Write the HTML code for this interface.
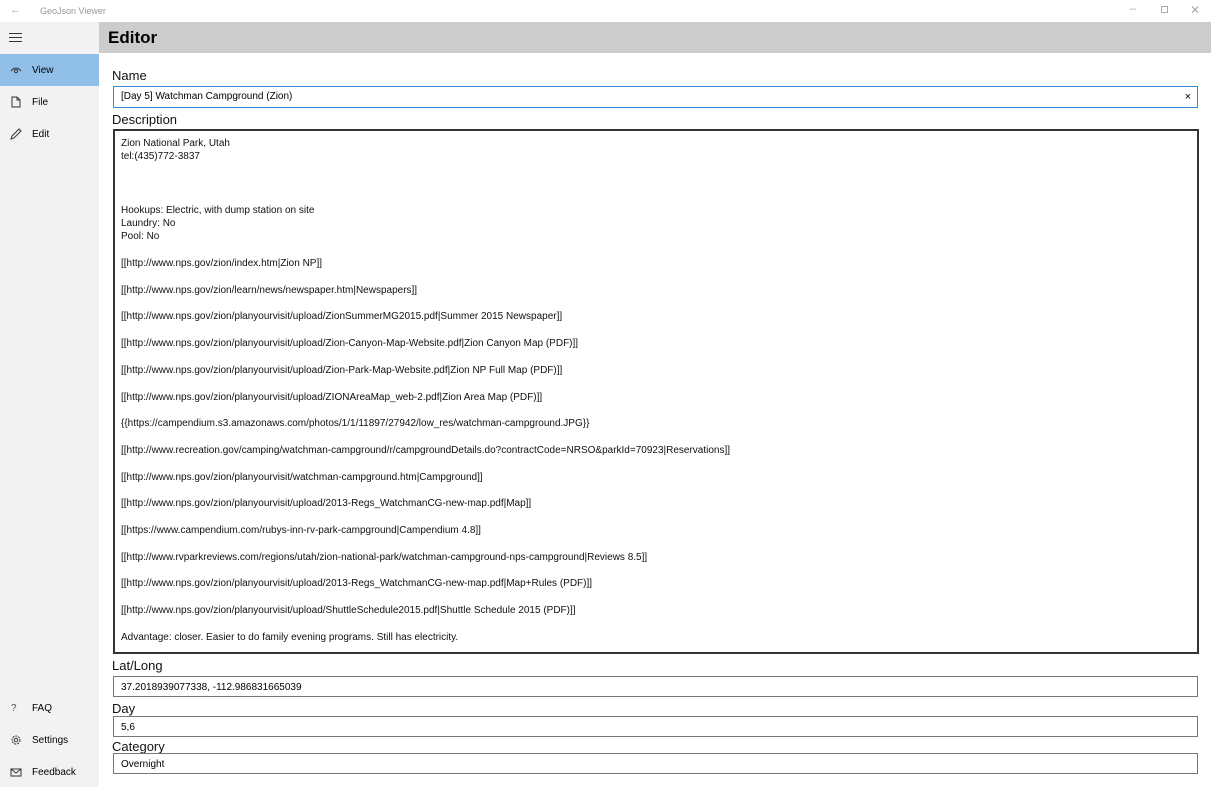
<!DOCTYPE html>
<html><head><meta charset="utf-8"><style>
*{margin:0;padding:0;box-sizing:border-box}
body{width:1211px;height:787px;overflow:hidden;background:#fff;font-family:"Liberation Sans",sans-serif;color:#000;position:relative}
.abs{position:absolute}
.tb{left:0;top:0;width:1211px;height:22px;background:#fff;font-size:9px;color:#999}
.side{left:0;top:22px;width:99px;height:765px;background:#f2f2f2}
.hdr{left:99px;top:22px;width:1112px;height:31px;background:#ccc;font-weight:bold;font-size:17px;padding:6px 0 0 9px}
.nav{left:0;width:99px;height:32px;font-size:10px;line-height:34px;padding-left:32px}
.nav svg{position:absolute;left:10px;top:10px}
.lbl{left:112px;font-size:13px;color:#111}
.inp{left:113px;width:1085px;border:1px solid #777;font-size:10px;padding-left:7px;line-height:21px}
.ta{left:113px;top:129px;width:1086px;height:525px;border:2px solid #333;font-size:10px;line-height:13.35px;padding:6px 0 0 6px;white-space:pre;color:#111}
</style></head><body>
<div class="abs tb"><span class="abs" style="left:10px;top:4px;font-size:11px;color:#aaa">←</span><span class="abs" style="left:40px;top:6px">GeoJson Viewer</span>
<span class="abs" style="left:1130px;top:3px;font-size:11px;color:#aaa">–</span>
<span class="abs" style="left:1161px;top:6px;width:7px;height:7px;border:1px solid #aaa"></span>
<span class="abs" style="left:1190px;top:3px;font-size:12px;color:#aaa">✕</span></div>
<div class="abs side"></div>
<div class="abs" style="left:9px;top:33px;width:13px;height:9px;border-top:1.3px solid #333;border-bottom:1.3px solid #333"><div style="margin-top:3px;border-top:1.3px solid #333"></div></div>
<div class="abs hdr">Editor</div>
<div class="abs nav" style="top:54px;background:#90c0e8">View<svg width="12" height="12" viewBox="0 0 12 12"><path d="M1 7 Q6 1 11 7" fill="none" stroke="#333"/><circle cx="6" cy="7" r="1.6" fill="none" stroke="#333"/></svg></div>
<div class="abs nav" style="top:86px">File<svg width="12" height="12" viewBox="0 0 12 12"><path d="M2 1H7L10 4V11H2Z M7 1V4H10" fill="none" stroke="#333"/></svg></div>
<div class="abs nav" style="top:118px">Edit<svg width="12" height="12" viewBox="0 0 12 12"><path d="M1 11L2 8L9 1L11 3L4 10Z" fill="none" stroke="#333"/></svg></div>
<div class="abs nav" style="top:692px">FAQ<span class="abs" style="left:11px;top:0;color:#555">?</span></div>
<div class="abs nav" style="top:724px">Settings<svg width="12" height="12" viewBox="0 0 12 12"><circle cx="6" cy="6" r="4" fill="none" stroke="#333" stroke-dasharray="2 1"/><circle cx="6" cy="6" r="1.8" fill="none" stroke="#333"/></svg></div>
<div class="abs nav" style="top:756px">Feedback<svg width="12" height="12" viewBox="0 0 12 12"><path d="M1 3H11V10H1Z M1 3L6 7L11 3" fill="none" stroke="#333"/></svg></div>
<div class="abs lbl" style="top:68px">Name</div>
<div class="abs inp" style="top:86px;height:22px;border:1.5px solid #3c8bd9;line-height:20px">[Day 5] Watchman Campground (Zion)<span class="abs" style="right:6px;top:0;font-size:11px">×</span></div>
<div class="abs lbl" style="top:112px">Description</div>
<div class="abs ta">Zion National Park, Utah
tel:(435)772-3837



Hookups: Electric, with dump station on site
Laundry: No
Pool: No

[[http://www.nps.gov/zion/index.htm|Zion NP]]

[[http://www.nps.gov/zion/learn/news/newspaper.htm|Newspapers]]

[[http://www.nps.gov/zion/planyourvisit/upload/ZionSummerMG2015.pdf|Summer 2015 Newspaper]]

[[http://www.nps.gov/zion/planyourvisit/upload/Zion-Canyon-Map-Website.pdf|Zion Canyon Map (PDF)]]

[[http://www.nps.gov/zion/planyourvisit/upload/Zion-Park-Map-Website.pdf|Zion NP Full Map (PDF)]]

[[http://www.nps.gov/zion/planyourvisit/upload/ZIONAreaMap_web-2.pdf|Zion Area Map (PDF)]]

{{https://campendium.s3.amazonaws.com/photos/1/1/11897/27942/low_res/watchman-campground.JPG}}

[[http://www.recreation.gov/camping/watchman-campground/r/campgroundDetails.do?contractCode=NRSO&amp;parkId=70923|Reservations]]

[[http://www.nps.gov/zion/planyourvisit/watchman-campground.htm|Campground]]

[[http://www.nps.gov/zion/planyourvisit/upload/2013-Regs_WatchmanCG-new-map.pdf|Map]]

[[https://www.campendium.com/rubys-inn-rv-park-campground|Campendium 4.8]]

[[http://www.rvparkreviews.com/regions/utah/zion-national-park/watchman-campground-nps-campground|Reviews 8.5]]

[[http://www.nps.gov/zion/planyourvisit/upload/2013-Regs_WatchmanCG-new-map.pdf|Map+Rules (PDF)]]

[[http://www.nps.gov/zion/planyourvisit/upload/ShuttleSchedule2015.pdf|Shuttle Schedule 2015 (PDF)]]

Advantage: closer. Easier to do family evening programs. Still has electricity.</div>
<div class="abs lbl" style="top:658px">Lat/Long</div>
<div class="abs inp" style="top:676px;height:21px">37.2018939077338, -112.986831665039</div>
<div class="abs lbl" style="top:701px">Day</div>
<div class="abs inp" style="top:716px;height:21px">5,6</div>
<div class="abs lbl" style="top:739px">Category</div>
<div class="abs inp" style="top:753px;height:21px">Overnight</div>
</body></html>
